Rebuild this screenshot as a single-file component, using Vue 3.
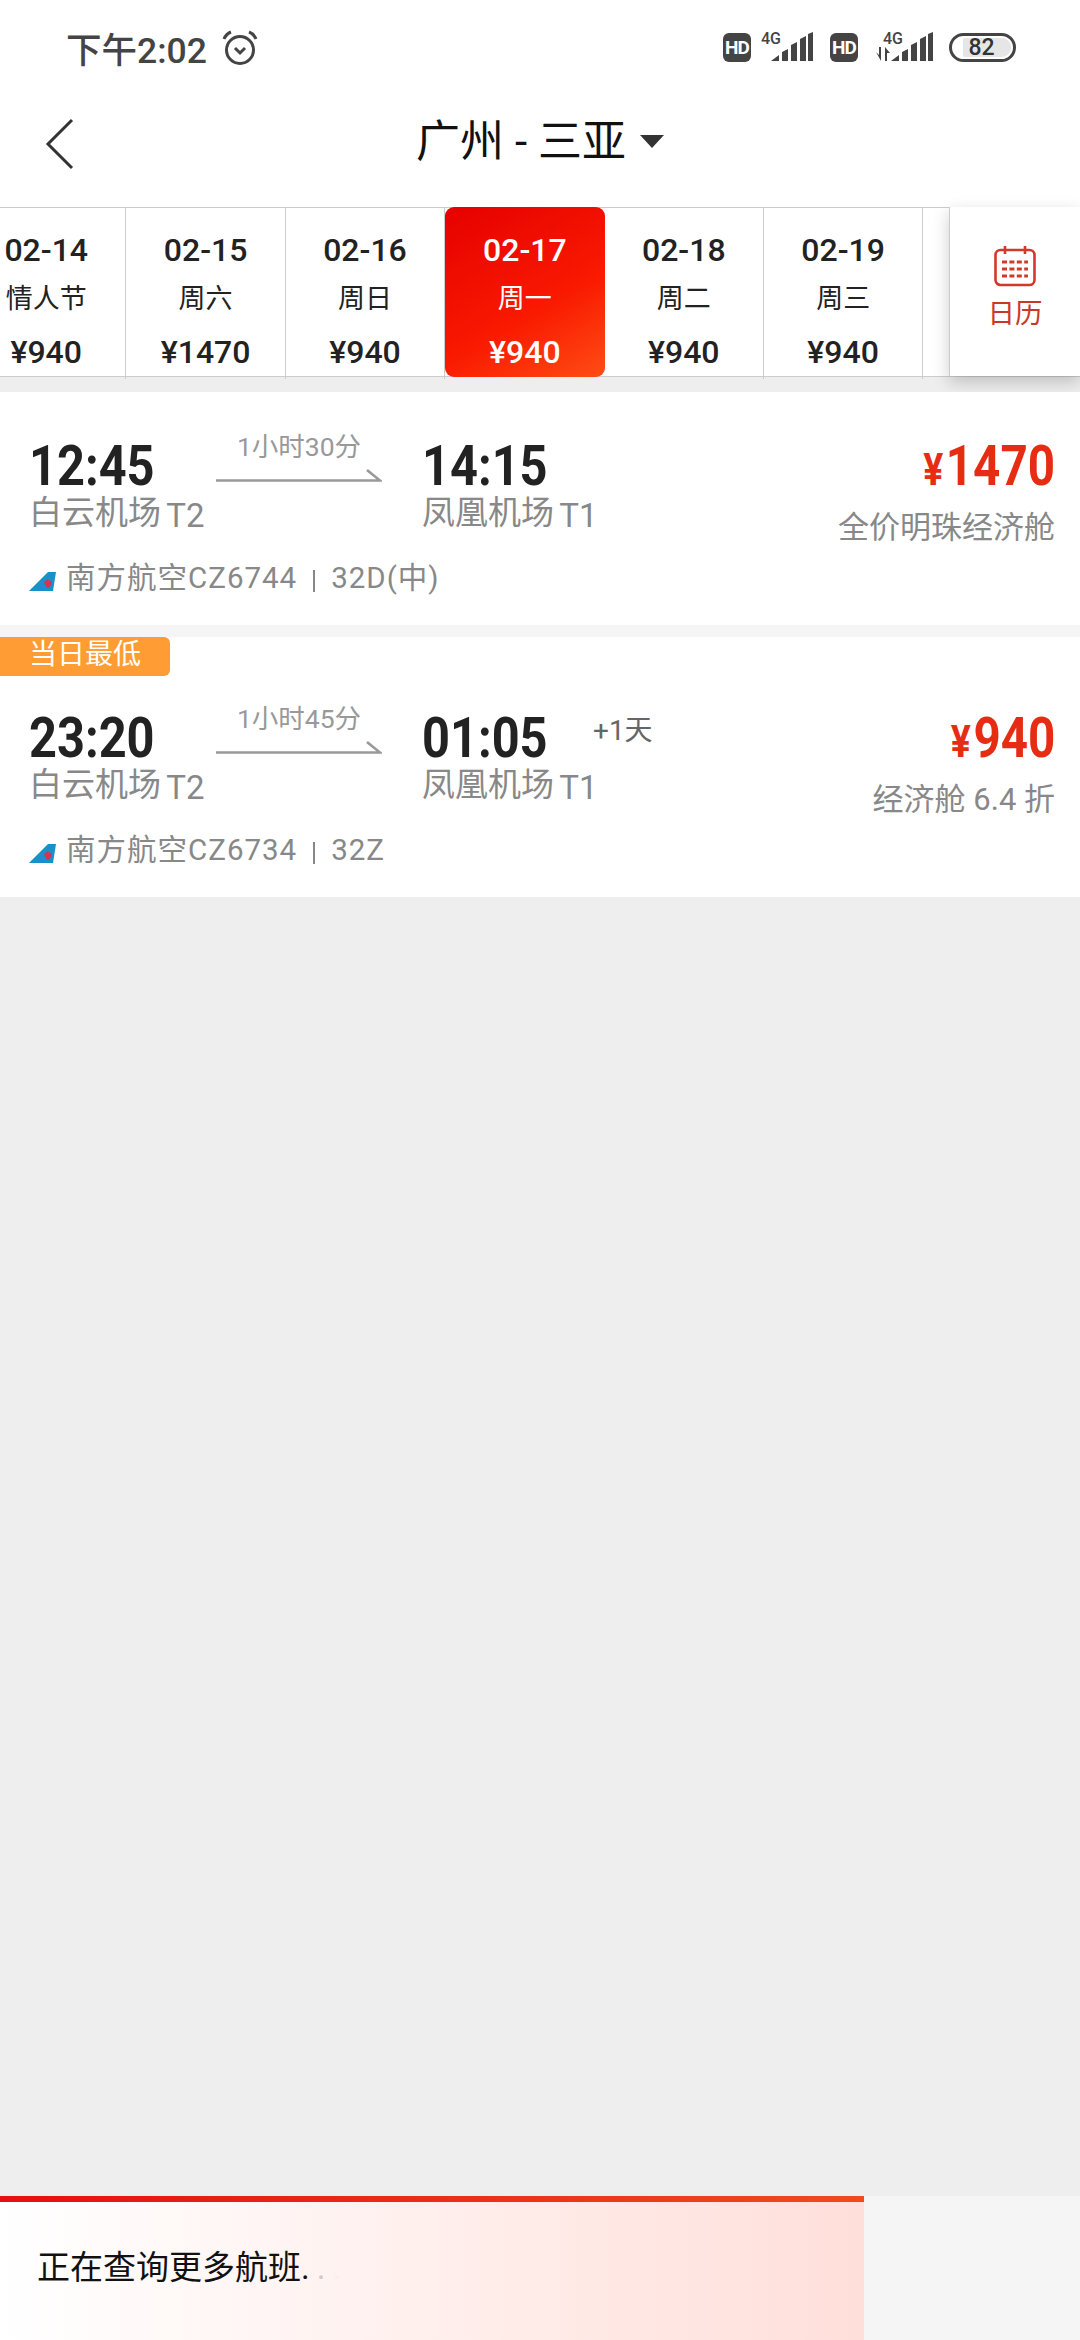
<template>
  <div class="page">
    <div class="status">
      <div class="clock">
        <span>下午2:02</span>
        <svg class="alarm" width="36" height="36" viewBox="0 0 36 36">
          <circle cx="18" cy="20" r="13.5" fill="none" stroke="#444" stroke-width="3" />
          <path d="M13 18l5 5 5-5" fill="none" stroke="#444" stroke-width="3" />
          <path d="M2 9q2-5 7-7M34 9q-2-5-7-7" fill="none" stroke="#444" stroke-width="3" />
        </svg>
      </div>
      <div class="indicators">
        <span class="hd">HD</span>
        <div class="net">
          <span class="g">4G</span>
          <svg width="42" height="30" viewBox="0 0 42 30"><path d="M0 29l8-6v6zM11 20l6-3v12h-6zM20 13l6-3v19h-6zM29 7l6-3v25h-6zM37 2l5-2v29h-5z" fill="#444" /></svg>
        </div>
        <span class="hd second">HD</span>
        <div class="net wide">
          <span class="g">4G</span>
          <svg width="58" height="30" viewBox="0 0 58 30">
            <path d="M1 20l3 3v-8h2v14zM10 29V15l5 6h-3v8z" fill="#444" />
            <path d="M16 29l8-6v6zM27 20l6-3v12h-6zM36 13l6-3v19h-6zM45 7l6-3v25h-6zM53 2l5-2v29h-5z" fill="#444" />
          </svg>
        </div>
        <div class="battery"><span class="level">82</span></div>
      </div>
    </div>

    <div class="nav">
      <svg class="back" width="30" height="52" viewBox="0 0 30 52">
        <path d="M27 2L3 26l24 24" fill="none" stroke="#333" stroke-width="3" />
      </svg>
      <div class="title">
        <span>广州 - 三亚</span>
        <i class="caret"></i>
      </div>
    </div>

    <div class="strip">
      <div class="tabs">
        <div class="tab" v-for="t in tabs" :key="t.date" :class="{ active: t.active }">
          <div class="date">{{ t.date }}</div>
          <div class="week">{{ t.week }}</div>
          <div class="fare">¥{{ t.price }}</div>
        </div>
      </div>
      <div class="calendar">
        <svg width="42" height="42" viewBox="0 0 42 42">
          <rect x="1.5" y="5" width="39" height="35" rx="5" fill="none" stroke="#d03a2b" stroke-width="2.6" />
          <path d="M11 1v8M31 1v8" stroke="#d03a2b" stroke-width="2.6" />
          <path d="M8 17h26M8 24h26M8 31h26" stroke="#d03a2b" stroke-width="3" stroke-dasharray="5 2.4" />
        </svg>
        <span>日历</span>
      </div>
    </div>

    <div class="flights">
      <div class="flight" v-for="f in flights" :key="f.no" :class="{ lowest: f.lowest }">
        <div class="tag" v-if="f.lowest">当日最低</div>
        <div class="top">
          <div class="dep">
            <div class="time">{{ f.dep }}</div>
            <div class="port">白云机场 <span>T2</span></div>
          </div>
          <div class="mid">
            <div class="dur">{{ f.dur }}</div>
            <svg class="arrow" width="166" height="14" viewBox="0 0 166 14">
              <path d="M0 12.5h164L151 2" fill="none" stroke="#999" stroke-width="2.6" />
            </svg>
          </div>
          <div class="arr">
            <div class="time-row">
              <div class="time">{{ f.arr }}</div>
              <span class="plus" v-if="f.plus">{{ f.plus }}</span>
            </div>
            <div class="port">凤凰机场 <span>T1</span></div>
          </div>
          <div class="price">
            <div class="amount"><small>¥</small>{{ f.price }}</div>
            <div class="cabin">{{ f.cabin }}</div>
          </div>
        </div>
        <div class="info">
          <svg width="27" height="20" viewBox="0 0 27 20">
            <path d="M0 20L19 1h8l-3 19z" fill="#1a8fc9" />
            <path d="M15 11l3-2 1-1 1 1 3 2-3 6h-2z" fill="#d8324f" />
          </svg>
          <span class="line">{{ f.no }}</span>
          <i class="sep"></i>
          <span>{{ f.plane }}</span>
        </div>
      </div>
    </div>

    <div class="rest"></div>

    <div class="loading">
      <div class="progress" :style="{ width: progress + '%' }">
        <div class="bar"></div>
        <div class="msg">正在查询更多航班<span class="dot">.</span><span class="dot two">.</span><span class="dot three">.</span></div>
      </div>
    </div>
  </div>
</template>

<script setup>
import { ref } from "vue";

const progress = ref(80);

const tabs = [
  { date: "02-14", week: "情人节", price: 940 },
  { date: "02-15", week: "周六", price: 1470 },
  { date: "02-16", week: "周日", price: 940 },
  { date: "02-17", week: "周一", price: 940, active: true },
  { date: "02-18", week: "周二", price: 940 },
  { date: "02-19", week: "周三", price: 940 },
];

const flights = [
  { dep: "12:45", arr: "14:15", dur: "1小时30分", price: 1470, cabin: "全价明珠经济舱", no: "南方航空CZ6744", plane: "32D(中)" },
  { dep: "23:20", arr: "01:05", dur: "1小时45分", plus: "+1天", price: 940, cabin: "经济舱 6.4 折", no: "南方航空CZ6734", plane: "32Z", lowest: true },
];
</script>

<style>
body {
  background: #eee;
}
</style>

<style scoped>
.page {
  display: flex;
  flex-direction: column;
  min-height: 2340px;
  background: #eee;
  font-family: Roboto, "Noto Sans CJK SC", sans-serif;
  color: #222;
}
.status {
  display: flex;
  justify-content: space-between;
  align-items: center;
  height: 86px;
  padding: 4px 64px 0 66px;
  background: #fff;
}
.clock {
  display: flex;
  align-items: center;
  gap: 15px;
  font-size: 35.5px;
  font-weight: 500;
  color: #444;
}
.alarm {
  margin-top: 2px;
}
.indicators {
  display: flex;
  align-items: center;
}
.hd {
  width: 28px;
  height: 29px;
  line-height: 29px;
  margin-right: 10px;
  border-radius: 6px;
  background: #444;
  color: #fff;
  font-size: 19px;
  font-weight: 700;
  text-align: center;
  letter-spacing: -1px;
}
.hd.second {
  margin-left: 17px;
  margin-right: 17px;
}
.net {
  display: flex;
  align-items: flex-end;
  width: 52px;
  height: 30px;
  justify-content: flex-end;
  position: relative;
}
.net.wide {
  width: 58px;
}
.g {
  position: absolute;
  left: 0;
  top: -3px;
  font-size: 16px;
  font-weight: 500;
  color: #444;
}
.net.wide .g {
  left: 8px;
}
.battery {
  display: flex;
  align-items: center;
  justify-content: center;
  width: 67px;
  height: 29px;
  margin-left: 16px;
  border: 3px solid #444;
  border-radius: 15px;
  box-sizing: border-box;
}
.level {
  width: 48px;
  height: 19px;
  line-height: 19px;
  margin-left: 8px;
  border-radius: 2px 9px 9px 2px;
  background: #e6e6e6;
  color: #333;
  font-size: 23px;
  font-weight: 500;
  text-indent: 6px;
}
.nav {
  display: grid;
  grid-template-columns: 1fr auto 1fr;
  align-items: center;
  height: 96px;
  padding-bottom: 21px;
  background: #fff;
}
.back {
  margin-left: 45px;
  margin-top: 11px;
}
.title {
  display: flex;
  align-items: center;
  gap: 14px;
  font-size: 44px;
  color: #111;
}
.caret {
  width: 0;
  height: 0;
  margin-top: 6px;
  border-style: solid;
  border-width: 13px 12px 0;
  border-color: #333 transparent transparent;
}
.strip {
  position: relative;
  height: 168px;
  margin-bottom: 15px;
  border-top: 1px solid #ccc;
  border-bottom: 1px solid #ccc;
  background: #fff;
}
.tabs {
  display: flex;
  margin-left: -33px;
  height: 100%;
}
.tab {
  position: relative;
  flex: none;
  width: 159.4px;
  box-sizing: border-box;
  padding-top: 24px;
  border-right: 1px solid #ccc;
  text-align: center;
}
.tab::after {
  content: "";
  position: absolute;
  right: -1px;
  bottom: -3px;
  width: 1px;
  height: 3px;
  background: #ccc;
}
.tab.active {
  margin: -1px 0;
  padding-top: 25px;
  height: 170px;
  border-right: 0;
  border-radius: 9px;
  background: linear-gradient(150deg, #e60000, #f91a00 60%, #ff4d14);
  color: #fff;
}
.tab.active::after {
  display: none;
}
.date,
.fare {
  font-size: 32px;
  font-weight: 500;
  line-height: 36px;
}
.week {
  margin-top: 13px;
  font-size: 27px;
  line-height: 36px;
}
.fare {
  margin-top: 17px;
}
.calendar {
  position: absolute;
  top: -1px;
  right: 0;
  bottom: 0;
  display: flex;
  flex-direction: column;
  align-items: center;
  justify-content: center;
  gap: 4px;
  width: 131px;
  padding-bottom: 8px;
  box-sizing: border-box;
  border-left: 1px solid #ccc;
  background: #fff;
  box-shadow: 0 6px 16px rgba(0, 0, 0, 0.2);
  font-size: 27.5px;
  color: #c8392b;
}
.flights {
  display: flex;
  flex-direction: column;
  gap: 12px;
  background: #f5f5f5;
}
.flight {
  position: relative;
  padding: 48px 25px 27px 29px;
  background: #fff;
}
.flight.lowest {
  padding-top: 75px;
}
.tag {
  position: absolute;
  top: 0;
  left: 0;
  width: 141px;
  height: 39px;
  padding-left: 29px;
  line-height: 36px;
  border-radius: 0 6px 6px 0;
  background: #ff9c33;
  color: #fff;
  font-size: 28px;
}
.top {
  display: flex;
}
.dep {
  width: 187px;
}
.mid {
  width: 166px;
  margin-right: 40px;
  text-align: center;
  color: #999;
}
.dur {
  margin-top: -11px;
  font-size: 26.5px;
  line-height: 36px;
}
.arrow {
  display: block;
  margin-top: 3px;
}
.time {
  width: 140px;
  font-size: 56px;
  font-weight: 700;
  line-height: 52px;
  color: #222;
  transform: scaleX(0.87);
  transform-origin: left;
}
.time-row {
  display: flex;
}
.plus {
  margin: 1px 0 0 31px;
  font-size: 28px;
  line-height: 36px;
  color: #666;
}
.port {
  margin-top: 2px;
  font-size: 33px;
  line-height: 38px;
  color: #888;
  white-space: nowrap;
}
.port span {
  position: relative;
  top: 3px;
  margin-left: -3px;
}
.price {
  margin-left: auto;
  text-align: right;
}
.amount {
  font-size: 56px;
  font-weight: 700;
  line-height: 52px;
  color: #e62d14;
  transform: scaleX(0.85);
  transform-origin: right;
}
.amount small {
  font-size: 44px;
  margin-right: 3px;
}
.cabin {
  margin-top: 13px;
  font-size: 31px;
  line-height: 38px;
  color: #888;
}
.info {
  display: flex;
  align-items: center;
  margin-top: 11px;
  font-size: 29.5px;
  line-height: 40px;
  letter-spacing: 1px;
  color: #888;
}
.info svg {
  margin-right: 10px;
  margin-top: 6px;
}
.sep {
  width: 2px;
  height: 22px;
  margin: 6px 16px 0 16px;
  background: #888;
}
.rest {
  flex: 1;
}
.loading {
  height: 144px;
  background: #f5f5f5;
}
.progress {
  display: flex;
  flex-direction: column;
  height: 100%;
  background: linear-gradient(90deg, #fff, #ffdfda);
}
.bar {
  height: 6px;
  background: linear-gradient(90deg, #e60f0f, #f04a1e);
}
.msg {
  padding: 44px 0 0 37px;
  font-size: 33px;
  line-height: 44px;
  color: #111;
}
.dot.two {
  color: #ccc;
  margin-left: 7px;
}
.dot.three {
  color: #fbeeec;
  margin-left: 7px;
}
</style>
